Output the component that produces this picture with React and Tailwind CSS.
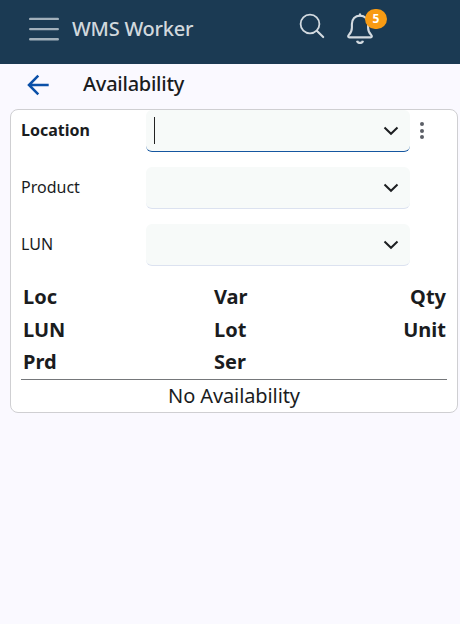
function MenuIcon() {
  return (
    <svg width="32" height="28" viewBox="0 0 32 28" fill="none" stroke="#a2b0bb" strokeWidth="2.4" strokeLinecap="round">
      <path d="M2.2 3.9h27.6M2.2 14.1h27.6M2.2 24.3h27.6" />
    </svg>
  );
}

function SearchIcon() {
  return (
    <svg width="28" height="28" viewBox="0 0 28 28" fill="none" stroke="#d3dae0" strokeLinecap="round">
      <circle cx="12" cy="12" r="9.4" strokeWidth="1.8" />
      <path d="M18.8 18.8l6.400 6.300" strokeWidth="2.100" />
    </svg>
  );
}

function BellIcon() {
  return (
    <svg width="28" height="32" viewBox="0 0 28 32" fill="none" stroke="#d3dae0" strokeWidth="2.1" strokeLinecap="round" strokeLinejoin="round">
      <path d="M14 2.4v1.2" />
      <path d="M14 3.6c-5 0-8.1 3.6-8.1 8.3v3.9c0 3.6-1.2 5.3-3.1 7.2-1 1-.9 2.400.7 2.400h21c1.600 0 1.700-1.400.7-2.400-1.900-1.900-3.100-3.600-3.100-7.200v-3.900c0-4.700-3.100-8.300-8.100-8.300z" />
      <path d="M11.100 28.800c.5 2.900 5.300 2.900 5.800 0" strokeLinecap="butt" strokeWidth="2.300" />
    </svg>
  );
}

function Field({ label, active }) {
  return (
    <div className="flex h-[42px] items-center">
      <label className={`w-[125px] pb-[3px] ${active ? "font-bold" : ""}`}>{label}</label>
      <div className={`flex h-[42px] w-[264px] items-center rounded-md border-b bg-[#f7faf9] pl-2 pr-[11px] ${active ? "border-[#1556a0]" : "border-[#dce2f0]"}`}>
        {active && <span className="h-[27px] w-px bg-[#222]" />}
        <svg className="ml-auto" width="16" height="12" viewBox="0 0 16 12" fill="none" stroke="#1d1f22" strokeWidth="2">
          <path d="M1.500 2.500l6.500 6.300 6.500-6.300" />
        </svg>
      </div>
      {active && (
        <div className="ml-[10px] flex flex-col gap-[2.400px] pb-px">
          <i className="size-1 rounded-full bg-[#5c5f67]" />
          <i className="size-1 rounded-full bg-[#5c5f67]" />
          <i className="size-1 rounded-full bg-[#5c5f67]" />
        </div>
      )}
    </div>
  );
}

export default function App() {
  return (
    <div className="h-[624px] w-[460px] overflow-hidden bg-[#faf9ff] font-['Noto_Sans',sans-serif] text-[#1a1c1e]">
      <header className="flex h-16 items-start bg-[#1b3a53] pl-7 text-[#d1d8dd]">
        <div className="mt-[15px]"><MenuIcon /></div>
        <span className="ml-3 mt-[15px] w-[226px] text-[20px] font-medium leading-7 tracking-[-0.25px]">WMS Worker</span>
        <div className="mt-3"><SearchIcon /></div>
        <div className="relative ml-5 mt-3">
          <BellIcon />
          <span className="absolute -top-[3px] left-[19px] flex h-5 w-[22px] items-center justify-center rounded-full bg-[#f89b13] text-[12px] font-bold text-white">5</span>
        </div>
      </header>
      <div className="flex h-[45px] items-start pl-[26px]">
        <svg className="mt-[9px]" width="24" height="24" viewBox="0 0 24 24" fill="none" stroke="#0a50a8" strokeWidth="2.500">
          <path d="M22.700 12H3M12.300 2.700L3 12l9.300 9.300" />
        </svg>
        <h1 className="ml-[33px] mt-[6px] text-[20px] font-medium leading-7 tracking-[-0.25px]">Availability</h1>
      </div>
      <main className="ml-[10px] h-[304px] w-[448px] rounded-lg border border-[#cfcfd2] bg-white px-[10px] text-[16px]">
        <div className="flex flex-col gap-[15px]">
          <Field label="Location" active />
          <Field label="Product" />
          <Field label="LUN" />
        </div>
        <div className="mt-[15px] grid h-[99px] grid-cols-[191px_1fr_auto] grid-rows-[33px_32px_32px] border-b border-[#75777a] pl-[2px] pr-px text-[20px] font-bold leading-8">
          <span>Loc</span><span>Var</span><span className="text-right">Qty</span>
          <span>LUN</span><span>Lot</span><span className="text-right">Unit</span>
          <span>Prd</span><span>Ser</span>
        </div>
        <p className="text-center text-[20px] leading-8 tracking-[-0.1px]">No Availability</p>
      </main>
    </div>
  );
}
